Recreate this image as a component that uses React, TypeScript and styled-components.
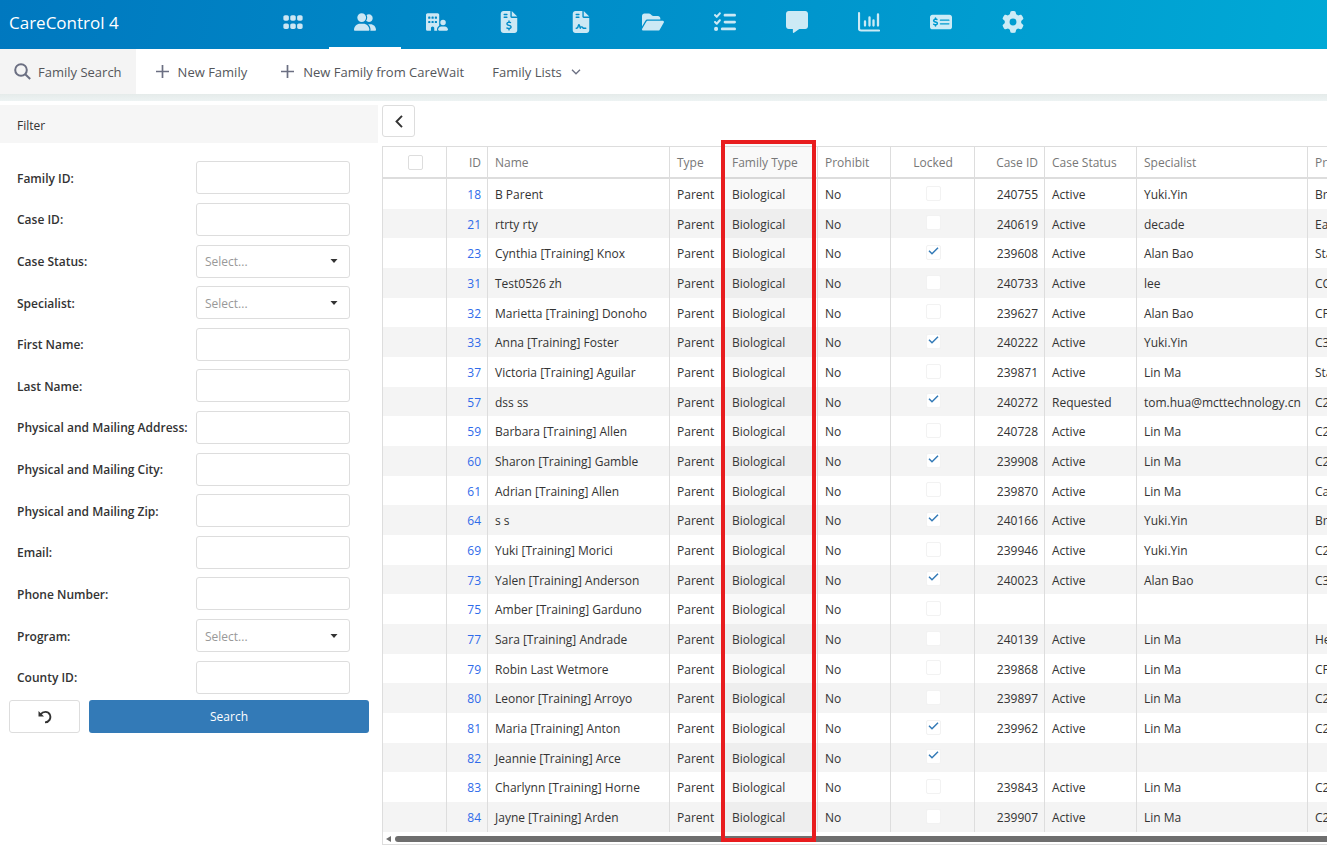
import React from 'react';
import styled, { createGlobalStyle, css } from 'styled-components';
import {
  FaGrip, FaUserGroup, FaBuildingUser, FaFileInvoiceDollar, FaFileContract, FaFolderOpen,
  FaListCheck, FaMessage, FaMoneyCheckDollar, FaGear,
} from 'react-icons/fa6';

const Global = createGlobalStyle`
  *, *::before, *::after { box-sizing: border-box; }
  body {
    margin: 0;
    background: #fff;
    color: #333;
    font: 12px/20px "Open Sans", "Noto Sans", sans-serif;
    overflow: hidden;
  }
  button, input, select { font: inherit; color: inherit; }
  button { cursor: pointer; }
`;

const Page = styled.div`
  min-height: 100vh;
  display: flex;
  flex-direction: column;
`;

const TopBar = styled.header`
  display: flex;
  height: 49px;
  background: linear-gradient(100deg, #0078bf, #00a9d6);
`;

const Brand = styled.a`
  width: 257px;
  padding: 12px 9px;
  font-size: 17px;
  line-height: 22px;
  color: #fff;
  text-decoration: none;
`;

const MainNav = styled.nav`
  display: flex;
`;

const NavItem = styled.a<{ $active?: boolean }>`
  width: 72px;
  display: flex;
  align-items: center;
  justify-content: center;
  color: rgba(255, 255, 255, 0.8);
  border-top: 2px solid transparent;
  border-bottom: 2px solid ${(p) => (p.$active ? '#fff' : 'transparent')};
  padding-bottom: 5px;
  svg { width: 22px; height: 22px; }
`;

const SubNav = styled.nav`
  display: flex;
  height: 45px;
  background: #fff;
`;

const SubItem = styled.button<{ $active?: boolean; $menu?: boolean }>`
  display: flex;
  align-items: center;
  gap: ${(p) => (p.$active ? 7 : 9)}px;
  padding: 0 14px 0 ${(p) => (p.$active || p.$menu ? 14 : 20)}px;
  border: 0;
  font-size: 13px;
  color: #54565b;
  background: ${(p) => (p.$active ? '#f4f4f4' : 'transparent')};
  svg { color: #6b6f82; }
`;

const Strip = styled.div`
  height: 7px;
  background: linear-gradient(#e5ebea, #edf3f3);
`;

const Body = styled.main`
  flex: 1;
  display: flex;
  align-items: flex-start;
  padding-top: 4px;
`;

const Sidebar = styled.aside`
  flex: 0 0 378px;
`;

const FilterTitle = styled.h2`
  margin: 0;
  height: 38px;
  padding: 11px 17px 0;
  font-size: 12px;
  line-height: 20px;
  font-weight: 400;
  background: #f6f6f6;
`;

const FilterForm = styled.form`
  padding: 14px 9px 0;
`;

const Fields = styled.div`
  display: grid;
  grid-auto-rows: 1fr;
  min-height: 541px;
`;

const Field = styled.div`
  display: grid;
  grid-template-columns: 179px 154px;
  align-items: center;
  padding-left: 8px;
`;

const Label = styled.label`
  padding-top: 2px;
  font-weight: 600;
  white-space: nowrap;
`;

const control = css`
  width: 100%;
  height: 33px;
  border: 1px solid #ddd;
  border-radius: 3px;
  background: #fff;
`;

const TextInput = styled.input`
  ${control}
  padding: 0 8px;
`;

const SelectWrap = styled.div`
  display: grid;
  align-items: center;
  > * { grid-area: 1 / 1; }
  svg { justify-self: end; margin-right: 12px; pointer-events: none; }
`;

const Select = styled.select`
  ${control}
  appearance: none;
  padding: 2px 8px 0;
  color: #999;
`;

const Actions = styled.div`
  display: flex;
  gap: 9px;
  padding-top: 2px;
`;

const OutlineButton = styled.button<{ $width: number; $height: number }>`
  width: ${(p) => p.$width}px;
  height: ${(p) => p.$height}px;
  padding: 0;
  display: flex;
  align-items: center;
  justify-content: center;
  border: 1px solid #ddd;
  border-radius: 3px;
  background: #fff;
`;

const SearchButton = styled.button`
  flex: 1;
  height: 33px;
  border: 0;
  border-radius: 3px;
  background: #337ab7;
  color: #fff;
`;

const Content = styled.section`
  flex: 1;
  min-width: 0;
  padding-left: 4px;
`;

const GridBox = styled.div`
  position: relative;
  margin-top: 9px;
  border: 1px solid #ddd;
  border-right: 0;
`;

const GridClip = styled.div`
  overflow: hidden;
`;

const Table = styled.table`
  table-layout: fixed;
  width: 1080px;
  border-collapse: separate;
  border-spacing: 0;
`;

const HeadCell = styled.th<{ $align?: string }>`
  height: 32px;
  padding: 2px 6px 0 7px;
  font-weight: 400;
  color: #777;
  text-align: ${(p) => p.$align || 'left'};
  border-right: 1px solid #ddd;
  border-bottom: 2px solid #ddd;
  white-space: nowrap;
`;

const Row = styled.tr`
  height: 30px;
  &:nth-child(3n + 2) { height: 29px; }
  &:nth-child(even) { background: #f4f4f4; }
`;

const Cell = styled.td<{ $align?: string }>`
  padding: 2px 6px 0 7px;
  text-align: ${(p) => p.$align || 'left'};
  border-right: 1px solid #ddd;
  white-space: nowrap;
  line-height: 20px;
`;

const IdLink = styled.a`
  color: #2f6bea;
  text-decoration: none;
`;

const Tick = styled.input<{ $faint?: boolean }>`
  appearance: none;
  display: block;
  width: 15px;
  height: 15px;
  margin: 0;
  border: 1px solid ${(p) => (p.$faint ? '#f2f2f2' : '#ddd')};
  border-radius: 2px;
  background: #fff;
`;

const TickBox = styled.label<{ $lift: number }>`
  display: grid;
  justify-content: center;
  padding-bottom: ${(p) => p.$lift}px;
  > * { grid-area: 1 / 1; }
`;

const ScrollBar = styled.div`
  display: flex;
  align-items: center;
  gap: 2px;
  height: 12px;
  padding: 2px 0 0 2px;
`;

const Thumb = styled.div`
  flex: 1;
  height: 6px;
  border-radius: 3px 0 0 3px;
  background: #6e6e6e;
`;

const Highlight = styled.div`
  position: absolute;
  top: -7px;
  bottom: 2px;
  left: 338px;
  width: 95px;
  border: 4px solid #e81c1e;
  background: rgba(128, 128, 128, 0.05);
  pointer-events: none;
`;

const ChartIcon = () => (
  <svg viewBox="0 0 22 22" fill="none" stroke="currentColor" strokeLinecap="round">
    <path d="M1 2V17.500Q1 19.500 3 19.500H21" strokeWidth="2.200" />
    <path d="M7 10.500V14.500M11.500 6.500V14.500M15.500 9.500V14.500M20 3.500V14.500" strokeWidth="2.300" />
  </svg>
);

const SearchIcon = () => (
  <svg width="17" height="17" viewBox="0 0 17 17" fill="none" stroke="currentColor" strokeWidth="2">
    <circle cx="7" cy="7" r="5.800" />
    <path d="M11.200 11.200L16.200 16" />
  </svg>
);

const PlusIcon = () => (
  <svg width="13" height="13" viewBox="0 0 13 13" stroke="currentColor" strokeWidth="1.700">
    <path d="M6.500 0V13M0 6.500H13" />
  </svg>
);

const ChevronDown = () => (
  <svg width="10" height="6" viewBox="0 0 10 6" fill="none" stroke="currentColor" strokeWidth="1.300">
    <path d="M1 .8L5 4.800L9 .8" />
  </svg>
);

const ChevronLeft = () => (
  <svg width="8" height="13" viewBox="0 0 8 13" fill="none" stroke="#333" strokeWidth="1.900">
    <path d="M7 .8L1.500 6.500L7 12.200" />
  </svg>
);

const Caret = () => (
  <svg width="8" height="4" viewBox="0 0 8 4" fill="#333"><path d="M.5 0H7.500L4 4Z" /></svg>
);

const UndoIcon = () => (
  <svg width="14" height="14" viewBox="0 0 14 14" fill="none" stroke="#333" strokeWidth="1.900">
    <path d="M2.500 4.500C5 1 10 1 11.800 4.500C13.500 8.500 11 12.200 7 12.400" />
    <path d="M.5 1V6.500H6Z" fill="#333" stroke="none" />
  </svg>
);

const CheckMark = () => (
  <svg width="15" height="15" viewBox="0 0 15 15" fill="none" stroke="#337ab7" strokeWidth="1.500">
    <path d="M3 5.800L6 8.800L12 2.800" />
  </svg>
);

const LeftArrow = () => (
  <svg width="8" height="8" viewBox="0 0 8 8" fill="#6e6e6e"><path d="M6 1V7L1 4Z" /></svg>
);

const navItems = [
  { name: 'Dashboard', icon: <FaGrip /> },
  { name: 'Families', icon: <FaUserGroup />, active: true },
  { name: 'Providers', icon: <FaBuildingUser /> },
  { name: 'Invoices', icon: <FaFileInvoiceDollar /> },
  { name: 'Contracts', icon: <FaFileContract /> },
  { name: 'Documents', icon: <FaFolderOpen /> },
  { name: 'Tasks', icon: <FaListCheck /> },
  { name: 'Messages', icon: <FaMessage /> },
  { name: 'Reports', icon: <ChartIcon /> },
  { name: 'Payments', icon: <FaMoneyCheckDollar /> },
  { name: 'Settings', icon: <FaGear /> },
];

const fields: [string, boolean?][] = [
  ['Family ID:'], ['Case ID:'], ['Case Status:', true], ['Specialist:', true], ['First Name:'],
  ['Last Name:'], ['Physical and Mailing Address:'], ['Physical and Mailing City:'],
  ['Physical and Mailing Zip:'], ['Email:'], ['Phone Number:'], ['Program:', true], ['County ID:'],
];

const columns = [64, 41, 182, 55, 93, 73, 84, 70, 92, 171, 155];

type Family = [number, string, boolean, string, string, string, string];

const families: Family[] = [
  [18, 'B Parent', false, '240755', 'Active', 'Yuki.Yin', 'Bri'],
  [21, 'rtrty rty', false, '240619', 'Active', 'decade', 'Eas'],
  [23, 'Cynthia [Training] Knox', true, '239608', 'Active', 'Alan Bao', 'Sta'],
  [31, 'Test0526 zh', false, '240733', 'Active', 'lee', 'CC'],
  [32, 'Marietta [Training] Donoho', false, '239627', 'Active', 'Alan Bao', 'CF'],
  [33, 'Anna [Training] Foster', true, '240222', 'Active', 'Yuki.Yin', 'C3'],
  [37, 'Victoria [Training] Aguilar', false, '239871', 'Active', 'Lin Ma', 'Sta'],
  [57, 'dss ss', true, '240272', 'Requested', 'tom.hua@mcttechnology.cn', 'C2'],
  [59, 'Barbara [Training] Allen', false, '240728', 'Active', 'Lin Ma', 'C2'],
  [60, 'Sharon [Training] Gamble', true, '239908', 'Active', 'Lin Ma', 'C2'],
  [61, 'Adrian [Training] Allen', false, '239870', 'Active', 'Lin Ma', 'Ca'],
  [64, 's s', true, '240166', 'Active', 'Yuki.Yin', 'Bri'],
  [69, 'Yuki [Training] Morici', false, '239946', 'Active', 'Yuki.Yin', 'C2'],
  [73, 'Yalen [Training] Anderson', true, '240023', 'Active', 'Alan Bao', 'C3'],
  [75, 'Amber [Training] Garduno', false, '', '', '', ''],
  [77, 'Sara [Training] Andrade', false, '240139', 'Active', 'Lin Ma', 'He'],
  [79, 'Robin Last Wetmore', false, '239868', 'Active', 'Lin Ma', 'CF'],
  [80, 'Leonor [Training] Arroyo', false, '239897', 'Active', 'Lin Ma', 'C2'],
  [81, 'Maria [Training] Anton', true, '239962', 'Active', 'Lin Ma', 'C2'],
  [82, 'Jeannie [Training] Arce', true, '', '', '', ''],
  [83, 'Charlynn [Training] Horne', false, '239843', 'Active', 'Lin Ma', 'C2'],
  [84, 'Jayne [Training] Arden', false, '239907', 'Active', 'Lin Ma', 'C2'],
];

export default function App() {
  return (
    <Page>
      <Global />
      <TopBar>
        <Brand href="#">CareControl 4</Brand>
        <MainNav>
          {navItems.map((n) => (
            <NavItem key={n.name} href="#" aria-label={n.name} $active={n.active}>{n.icon}</NavItem>
          ))}
        </MainNav>
      </TopBar>
      <SubNav>
        <SubItem $active><SearchIcon />Family Search</SubItem>
        <SubItem><PlusIcon />New Family</SubItem>
        <SubItem><PlusIcon />New Family from CareWait</SubItem>
        <SubItem $menu>Family Lists<ChevronDown /></SubItem>
      </SubNav>
      <Strip />
      <Body>
        <Sidebar>
          <FilterTitle>Filter</FilterTitle>
          <FilterForm onSubmit={(e) => e.preventDefault()}>
            <Fields>
              {fields.map(([label, select]) => (
                <Field key={label}>
                  <Label htmlFor={label}>{label}</Label>
                  {select ? (
                    <SelectWrap>
                      <Select id={label}><option>Select...</option></Select>
                      <Caret />
                    </SelectWrap>
                  ) : (
                    <TextInput id={label} type="text" />
                  )}
                </Field>
              ))}
            </Fields>
            <Actions>
              <OutlineButton type="reset" aria-label="Reset" $width={71} $height={33}><UndoIcon /></OutlineButton>
              <SearchButton type="submit">Search</SearchButton>
            </Actions>
          </FilterForm>
        </Sidebar>
        <Content>
          <OutlineButton aria-label="Collapse" $width={33} $height={32}><ChevronLeft /></OutlineButton>
          <GridBox>
            <GridClip>
              <Table>
                <colgroup>{columns.map((w, i) => <col key={i} width={w} />)}</colgroup>
                <thead>
                  <tr>
                    <HeadCell>
                      <TickBox $lift={2}><Tick type="checkbox" aria-label="Select all" /></TickBox>
                    </HeadCell>
                    <HeadCell $align="right">ID</HeadCell>
                    <HeadCell>Name</HeadCell>
                    <HeadCell>Type</HeadCell>
                    <HeadCell>Family Type</HeadCell>
                    <HeadCell>Prohibit</HeadCell>
                    <HeadCell $align="center">Locked</HeadCell>
                    <HeadCell $align="right">Case ID</HeadCell>
                    <HeadCell>Case Status</HeadCell>
                    <HeadCell>Specialist</HeadCell>
                    <HeadCell>Program</HeadCell>
                  </tr>
                </thead>
                <tbody>
                  {families.map(([id, name, locked, caseId, status, specialist, program]) => (
                    <Row key={id}>
                      <Cell />
                      <Cell $align="right"><IdLink href="#">{id}</IdLink></Cell>
                      <Cell>{name}</Cell>
                      <Cell>Parent</Cell>
                      <Cell>Biological</Cell>
                      <Cell>No</Cell>
                      <Cell>
                        <TickBox $lift={4}>
                          <Tick $faint type="checkbox" aria-label={`${name} locked`} checked={locked} readOnly />
                          {locked && <CheckMark />}
                        </TickBox>
                      </Cell>
                      <Cell $align="right">{caseId}</Cell>
                      <Cell>{status}</Cell>
                      <Cell>{specialist}</Cell>
                      <Cell>{program}</Cell>
                    </Row>
                  ))}
                </tbody>
              </Table>
            </GridClip>
            <ScrollBar><LeftArrow /><Thumb /></ScrollBar>
            <Highlight />
          </GridBox>
        </Content>
      </Body>
    </Page>
  );
}
